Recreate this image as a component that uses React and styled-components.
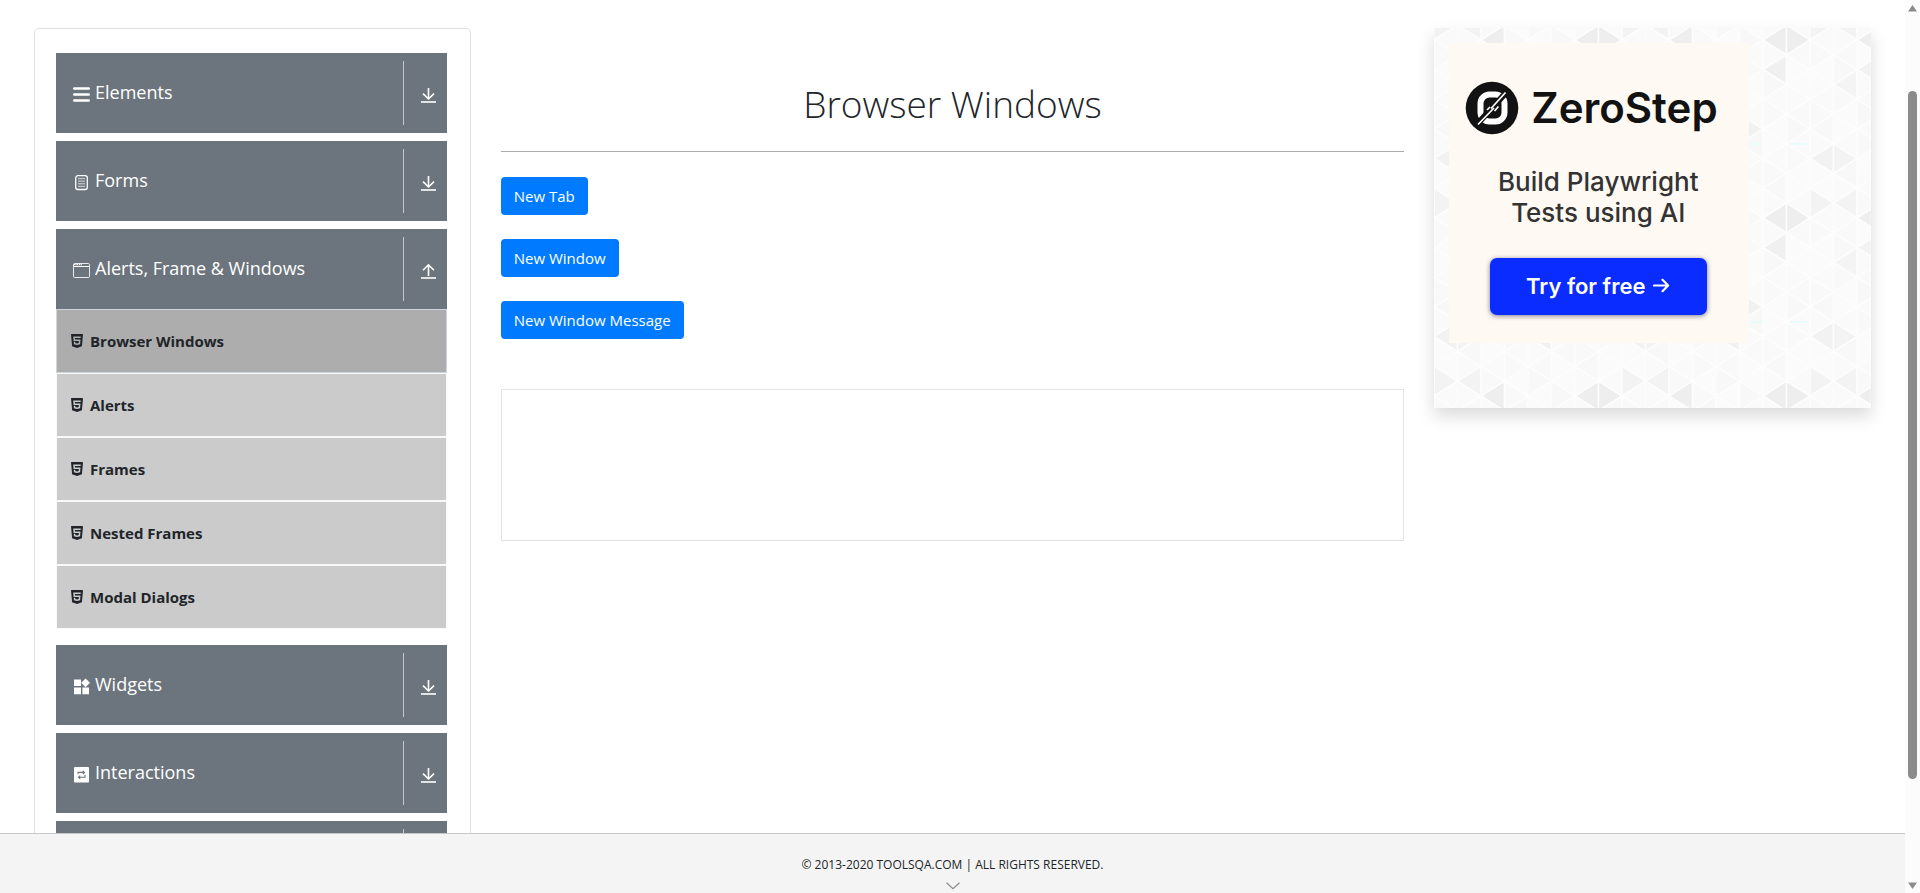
import React, { useState } from "react";
import styled, { createGlobalStyle, css } from "styled-components";
import { FaHtml5 } from "react-icons/fa";

const GlobalStyle = createGlobalStyle`
  *, *::before, *::after { box-sizing: border-box; }
  body {
    margin: 0;
    background: #fff;
    color: #212529;
    font-family: "Open Sans", "Noto Sans", sans-serif;
    font-size: 15px;
    line-height: 24px;
  }
  button { font: inherit; color: inherit; border: 0; cursor: pointer; }
`;

const Shell = styled.div`
  display: flex;
  height: 100vh;
  overflow: hidden;
`;

const Page = styled.div`
  flex: 1;
  min-width: 0;
  display: flex;
  flex-direction: column;
`;

const Content = styled.main`
  flex: 1;
  min-height: 0;
  overflow: hidden;
  display: grid;
  grid-template-columns: 1fr 2fr 1fr;
  align-items: start;
  padding: 28px 19px 0;
`;

const Column = styled.div`
  padding: 0 15px;
  min-width: 0;
`;

/* Sidebar */

const Sidebar = styled.nav`
  display: flex;
  flex-direction: column;
  gap: 8px;
  padding: 24px 23px 24px 21px;
  border: 1px solid #dfdfdf;
  border-radius: 5px;
`;

const GroupHeader = styled.button`
  display: flex;
  width: 100%;
  height: 80px;
  padding: 8px 10px 8px 17px;
  background: #6c757d;
  color: #fff;
  text-align: left;
`;

const GroupLabel = styled.span`
  flex: 1;
  display: flex;
  align-items: center;
  gap: 5px;
  padding-bottom: 2px;
  font-size: 18px;

  svg {
    width: 17px;
    height: 17px;
    margin-top: 4px;
  }
`;

const GroupToggle = styled.span`
  display: flex;
  align-items: center;
  padding: 4px 0 0 16px;
  border-left: 1px solid #c4c8cb;
`;

const SubList = styled.ul`
  list-style: none;
  margin: 0;
  padding: 0 0 8px;
`;

const SubLink = styled.a`
  display: flex;
  align-items: center;
  gap: 7px;
  height: 64px;
  padding: 0 14px;
  border: 1px solid #f8f9fa;
  background: #cbcbcb;
  color: #212529;
  font-weight: 700;
  text-decoration: none;

  svg {
    width: 12px;
    height: 16px;
  }

  ${(p) =>
    p.$active &&
    css`
      background: #adadad;
      border-color: #cfd5dd;
    `}
`;

/* Main column */

const Title = styled.h1`
  margin: 0;
  padding: 52px 0 23px;
  border-bottom: 1px solid #aaacae;
  font-size: 37px;
  font-weight: 300;
  line-height: 48px;
  text-align: center;
`;

const ButtonStack = styled.div`
  display: flex;
  flex-direction: column;
  align-items: flex-start;
  gap: 24px;
  padding: 25px 0 50px;
`;

const PrimaryButton = styled.button`
  height: 38px;
  padding: 0 13px;
  border-radius: 4px;
  background: #007bff;
  color: #fff;
`;

const Panel = styled.section`
  height: 152px;
  border: 1px solid #e3e3e3;
`;

/* Advertisement */

const AdCard = styled.aside`
  position: relative;
  height: 380px;
  padding: 15px;
  box-shadow: 0 8px 16px rgba(0, 0, 0, 0.15);
`;

const AdBackdrop = styled.svg`
  position: absolute;
  inset: 0;
  width: 100%;
  height: 100%;
`;

const AdBanner = styled.a`
  position: relative;
  display: flex;
  flex-direction: column;
  align-items: center;
  width: 300px;
  height: 300px;
  padding: 38px 2px 0 0;
  background: #fef9f2;
  color: #333;
  font-family: Inter, sans-serif;
  text-decoration: none;
`;

const AdBrand = styled.span`
  align-self: flex-start;
  display: flex;
  align-items: center;
  gap: 12px;
  padding-left: 16px;
  color: #121212;
  font-size: 42px;
  font-weight: 600;
  line-height: 54px;
`;

const AdTagline = styled.span`
  margin-top: 31px;
  font-size: 26px;
  font-weight: 500;
  line-height: 31px;
  text-align: center;
`;

const AdAction = styled.span`
  display: flex;
  align-items: center;
  justify-content: center;
  gap: 8px;
  width: 217px;
  height: 57px;
  margin-top: 30px;
  padding-bottom: 2px;
  border-radius: 7px;
  background: #0a2cff;
  box-shadow: 0 1px 5px rgba(0, 0, 60, 0.5);
  color: #fff;
  font-size: 22px;
  font-weight: 600;
`;

/* Footer and scroll track */

const Footer = styled.footer`
  display: flex;
  flex-direction: column;
  align-items: center;
  gap: 5px;
  height: 60px;
  padding-top: 19px;
  border-top: 1px solid #c8c8c8;
  background: #f4f4f4;
  font-size: 12px;
`;

const ScrollTrack = styled.div`
  flex: none;
  width: 15px;
  display: grid;
  grid-template-rows: 7px 79fr 687fr 103fr 7px;
  justify-items: center;
  padding: 5px 0 4px;
  background: #fcfcfc;
`;

const ScrollThumb = styled.div`
  grid-row: 3;
  width: 9px;
  border-radius: 5px;
  background: #8b8b8b;
`;

const ScrollArrow = styled.svg`
  grid-row: ${(p) => p.$row};
  width: 9px;
  height: 7px;
  fill: #8b8b8b;
`;

/* Icons */

const ListIcon = () => (
  <svg viewBox="0 0 17 17" stroke="#fff" strokeWidth="2.6" strokeLinecap="round">
    <path d="M1.300 2.500h14.400M1.300 8.500h14.400M1.300 14.500h14.400" />
  </svg>
);

const FormIcon = () => (
  <svg viewBox="0 0 17 17" fill="none" stroke="#fff">
    <rect x="2.7" y="1.7" width="11.6" height="13.8" rx="2.2" strokeWidth="1.3" />
    <path d="M5 4.7h7M5 7.2h7M5 9.8h7M5 12.3h7" strokeOpacity="0.75" />
  </svg>
);

const WindowIcon = () => (
  <svg viewBox="0 0 17 17" fill="none" stroke="#fff">
    <rect x="0.5" y="1.5" width="16" height="14" rx="1.2" strokeOpacity="0.85" />
    <path d="M1 4.5h15" />
    <path d="M1 2.6h8" strokeDasharray="1.6 0.8" strokeWidth="1.4" />
  </svg>
);

const WidgetsIcon = () => (
  <svg viewBox="0 0 17 17" fill="#fff">
    <path d="M1 1.5h7v6.6H1zM1 9.6h7v6.6H1zM9.4 9.6h6.6v6.6H9.4zM12.6 0.4l4.4 4.4-4.4 4.4-4.4-4.4z" />
  </svg>
);

const InteractionsIcon = () => (
  <svg viewBox="0 0 17 17" fill="none">
    <rect x="1" y="1" width="15" height="15.5" rx="1" fill="#fff" />
    <path
      d="M5 8.200V6.400h6M12 8.800v2.400H6M9.800 4.800l1.700 1.600-1.700 1.600M7.200 9.600l-1.700 1.600 1.700 1.600"
      stroke="#6c757d"
      strokeWidth="1.1"
    />
  </svg>
);

const ToggleIcon = ({ open }) => (
  <svg width="17" height="17" viewBox="0 0 17 17" fill="none" stroke="#fff">
    <path
      d={open ? "M8.5 13V2M3 7.2l5.500-5.400L14 7.2" : "M8.5 1v11M3 6.600l5.500 5.400L14 6.600"}
      strokeWidth="1.6"
    />
    <path d="M1 15h15" strokeWidth="2" strokeOpacity="0.8" />
  </svg>
);

const ArrowIcon = () => (
  <svg width="17" height="15" viewBox="0 0 17 15" fill="none" stroke="#fff" strokeWidth="2.2">
    <path d="M1 7.5h14M9.500 1.800l5.600 5.700-5.600 5.700" strokeLinecap="round" strokeLinejoin="round" />
  </svg>
);

const BrandMark = () => (
  <svg width="54" height="54" viewBox="0 0 54 54" fill="none">
    <circle cx="27" cy="27" r="26.3" fill="#121212" />
    <rect x="15.5" y="13.5" width="24" height="27" rx="9" stroke="#fff" strokeWidth="6" />
    <path d="M10 45.500 44 8.500" stroke="#121212" strokeWidth="6" />
    <path d="M13 43.500 29 27M22 29 25 26M26 27.500 40.500 11.500M29.500 30l4-4.500" stroke="#fff" strokeWidth="1.7" />
  </svg>
);

/* Triangle tile: 8 columns by 6 rows of triangles sharing vertical edges */

const COL = 23.5;
const HALF = 178 / 12;
const SHADES = ["#fafafa", "#f9f9f9", "#fbfbfb", "#f9f9f9", "#f8f8f8", "#fafafa", "#fbfbfb"];
const ACCENTS = {
  "L6,0": "#eeeeee", "R7,0": "#eeeeee", "L6,2": "#f0f0f0", "L1,3": "#f4f4f4",
  "L2,2": "#f2f2f2", "R5,6": "#f1f1f1", "L0,8": "#f2f2f2", "R1,8": "#f3f3f3",
  "R0,11": "#f3f3f3", "L1,11": "#f3f3f3", "L2,0": "#eeeeee", "L4,8": "#f1f1f1",
};

const triangles = [];
for (let c = 0; c < 8; c += 1) {
  for (let h = -2; h <= 13; h += 1) {
    const wrapped = (h + 12) % 12;
    const side = (h + c) % 2 === 0 ? "L" : "R";
    const y = 12 + h * HALF;
    const apex = side === "L" ? c * COL : (c + 1) * COL;
    const base = side === "L" ? (c + 1) * COL : c * COL;
    triangles.push({
      id: `${c}:${h}`,
      points: `${apex},${y} ${base},${y - HALF} ${base},${y + HALF}`,
      fill: ACCENTS[`${side}${c},${wrapped}`] || SHADES[(c * 5 + wrapped * 3) % 7],
    });
  }
}

const Backdrop = () => (
  <AdBackdrop aria-hidden="true">
    <defs>
      <pattern id="tile" width="188" height="178" patternUnits="userSpaceOnUse">
        {triangles.map((t) => (
          <polygon key={t.id} points={t.points} fill={t.fill} stroke="#fdfdfd" strokeWidth="1.5" />
        ))}
        <path d="M129 116h12M168 116h19" stroke="#e8fcfc" strokeWidth="2" />
      </pattern>
    </defs>
    <rect width="100%" height="100%" fill="url(#tile)" />
  </AdBackdrop>
);

const GROUPS = [
  { id: "elements", label: "Elements", Icon: ListIcon },
  { id: "forms", label: "Forms", Icon: FormIcon },
  {
    id: "windows",
    label: "Alerts, Frame & Windows",
    Icon: WindowIcon,
    items: ["Browser Windows", "Alerts", "Frames", "Nested Frames", "Modal Dialogs"],
  },
  { id: "widgets", label: "Widgets", Icon: WidgetsIcon },
  { id: "interactions", label: "Interactions", Icon: InteractionsIcon },
  { id: "more" },
];

export default function App() {
  const [openGroup, setOpenGroup] = useState("windows");

  return (
    <>
      <GlobalStyle />
      <Shell>
        <Page>
          <Content>
            <Column>
              <Sidebar>
                {GROUPS.map(({ id, label, Icon, items }) => {
                  const open = openGroup === id;
                  return (
                    <div key={id}>
                      <GroupHeader
                        type="button"
                        aria-expanded={open}
                        onClick={() => setOpenGroup(open ? null : id)}
                      >
                        <GroupLabel>
                          {Icon && <Icon />}
                          {label}
                        </GroupLabel>
                        <GroupToggle>
                          <ToggleIcon open={open} />
                        </GroupToggle>
                      </GroupHeader>
                      {open && items && (
                        <SubList>
                          {items.map((item, index) => (
                            <li key={item}>
                              <SubLink href="#" $active={index === 0}>
                                <FaHtml5 />
                                {item}
                              </SubLink>
                            </li>
                          ))}
                        </SubList>
                      )}
                    </div>
                  );
                })}
              </Sidebar>
            </Column>

            <Column>
              <Title>Browser Windows</Title>
              <ButtonStack>
                <PrimaryButton type="button">New Tab</PrimaryButton>
                <PrimaryButton type="button">New Window</PrimaryButton>
                <PrimaryButton type="button">New Window Message</PrimaryButton>
              </ButtonStack>
              <Panel />
            </Column>

            <Column>
              <AdCard>
                <Backdrop />
                <AdBanner href="#">
                  <AdBrand>
                    <BrandMark />
                    ZeroStep
                  </AdBrand>
                  <AdTagline>
                    Build Playwright
                    <br />
                    Tests using AI
                  </AdTagline>
                  <AdAction>
                    Try for free
                    <ArrowIcon />
                  </AdAction>
                </AdBanner>
              </AdCard>
            </Column>
          </Content>

          <Footer>
            <span>© 2013-2020 TOOLSQA.COM | ALL RIGHTS RESERVED.</span>
            <svg width="14" height="8" viewBox="0 0 14 8" fill="none" stroke="#8a8a8a">
              <path d="M0.5 0.8 7 6.8l6.500-6" strokeWidth="1.2" />
            </svg>
          </Footer>
        </Page>

        <ScrollTrack aria-hidden="true">
          <ScrollArrow $row={1} viewBox="0 0 9 7">
            <path d="M4.500 0 9 6.500H0z" />
          </ScrollArrow>
          <ScrollThumb />
          <ScrollArrow $row={5} viewBox="0 0 9 7">
            <path d="M0 0.500h9L4.500 7z" />
          </ScrollArrow>
        </ScrollTrack>
      </Shell>
    </>
  );
}
